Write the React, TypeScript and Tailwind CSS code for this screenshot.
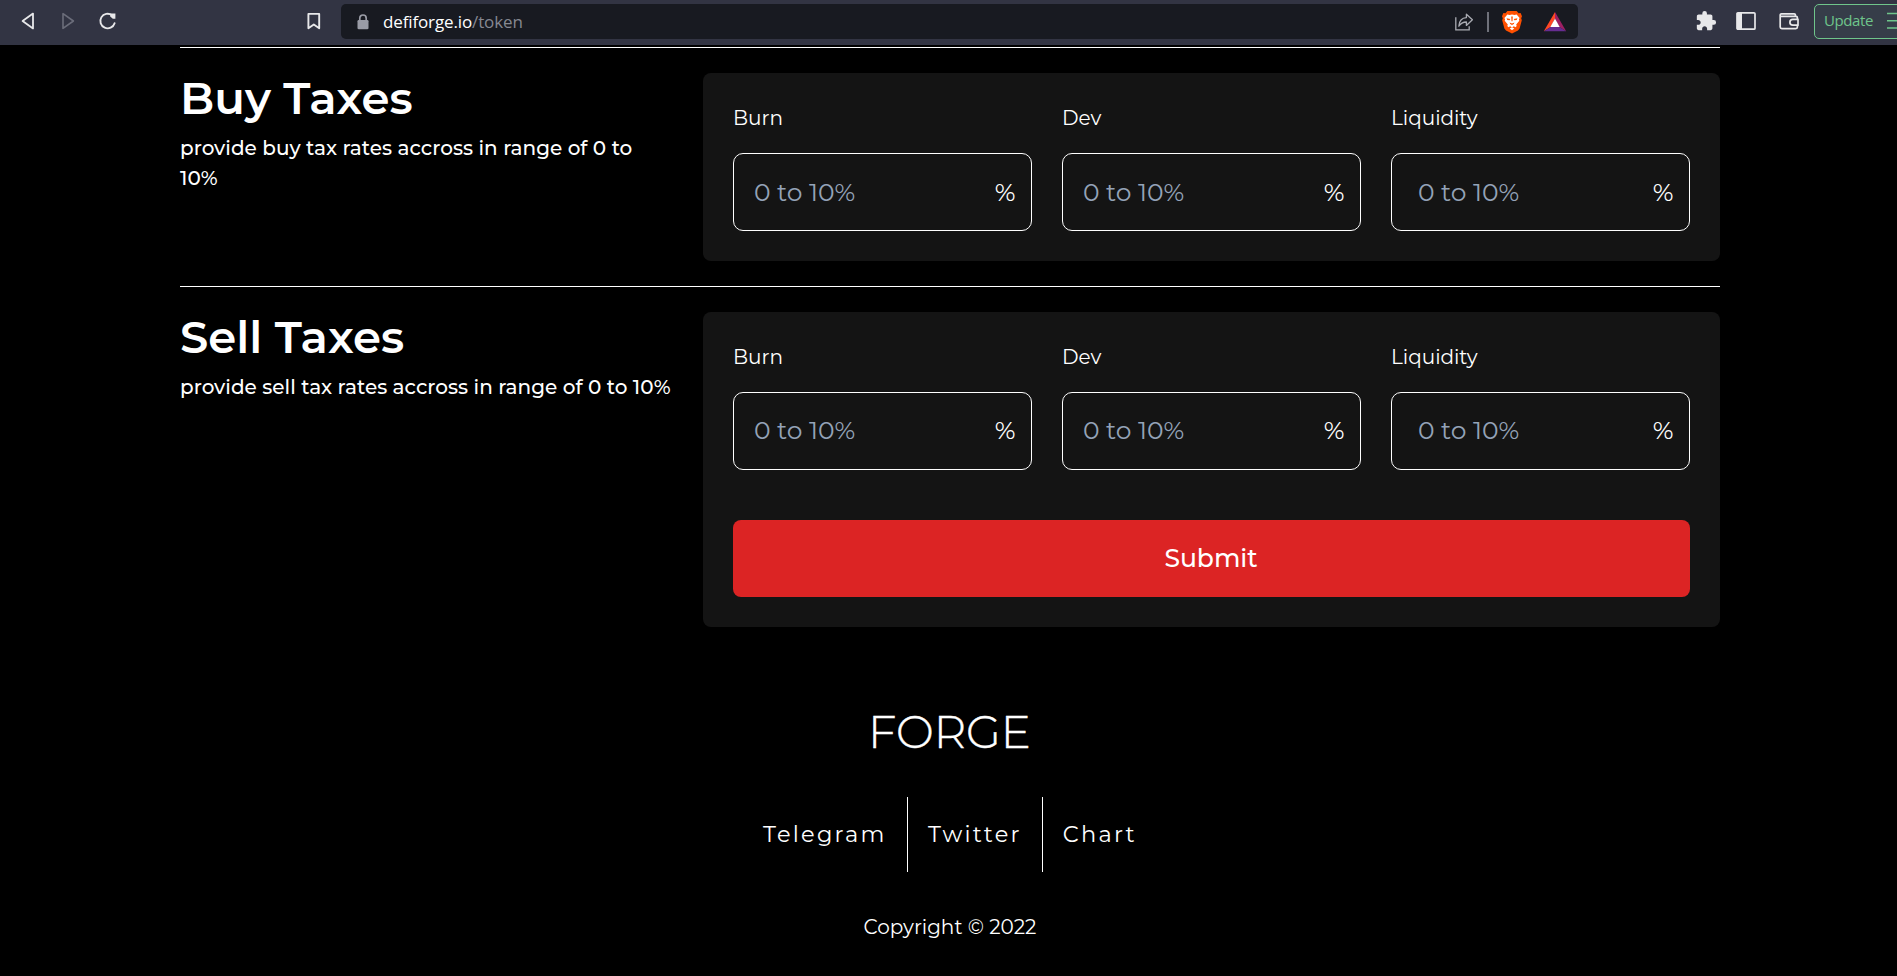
import { MdExtension } from "react-icons/md";

type Field = { label: string; input: string };

const fields: Field[] = [
  { label: "Burn", input: "pl-[20px]" },
  { label: "Dev", input: "pl-[20px]" },
  { label: "Liquidity", input: "pl-[26px]" },
];

function BrowserBar() {
  return (
    <header className="flex h-[45px] w-full items-start overflow-hidden bg-[#323443] text-[#e8e8ea]">
      <div className="flex h-[42px] w-[341px] shrink-0 items-center pl-[20px]">
        <svg width="16" height="20" viewBox="0 0 16 20" fill="none" stroke="currentColor" strokeWidth="1.8" strokeLinejoin="round">
          <path d="M13 2.6v14.8L2.6 10z" />
        </svg>
        <svg className="ml-[24px] text-[#6b6d7a]" width="16" height="20" viewBox="0 0 16 20" fill="none" stroke="currentColor" strokeWidth="1.6" strokeLinejoin="round">
          <path d="M3 2.6v14.8L13.4 10z" />
        </svg>
        <svg className="ml-[21px]" width="22" height="20" viewBox="0 0 22 20" fill="none" stroke="currentColor" strokeWidth="1.9" strokeLinecap="round">
          <path d="M17.6 12.2A7.3 7.3 0 1 1 15 4.2" />
          <path d="M13.2 2.4h5.2v5.4h-2.6l-2.6-2.4z" fill="currentColor" stroke="none" />
        </svg>
        <svg className="ml-[187px]" width="16" height="20" viewBox="0 0 16 20" fill="none" stroke="currentColor" strokeWidth="1.9" strokeLinejoin="round">
          <path d="M2.4 2.9h10.8v14.4l-5.4-3.8-5.4 3.8z" />
        </svg>
      </div>
      <div className="mt-[4px] flex h-[35px] w-[1237px] shrink-0 items-center rounded-[5px] bg-[#181a21]">
        <svg className="ml-[15px] text-[#9a9ca6]" width="14" height="16" viewBox="0 0 14 16">
          <path d="M3.8 7V4.2a3.2 3.2 0 0 1 6.4 0V7" fill="none" stroke="currentColor" strokeWidth="1.7" />
          <rect x="1.5" y="6" width="11" height="9.2" rx="1.3" fill="currentColor" />
        </svg>
        <div className="ml-[13px] w-[1071px] font-['Open_Sans','Noto_Sans',sans-serif] text-[17px] leading-[24px] tracking-[-0.13px] whitespace-nowrap text-white">
          defiforge.io<span className="text-[#868891]">/token</span>
        </div>
        <svg className="shrink-0 text-[#a9abb2]" width="20" height="20" viewBox="0 0 20 20" fill="none" stroke="currentColor" strokeWidth="1.3">
          <path d="M1.8 5.2v12.6h13.4v-3.6" />
          <path d="M12.4 2.2v3.4C7.6 5.8 5.2 9 4.8 14.2c1.8-2.9 4-4.2 7.6-4.2v3.4l6-5.6z" strokeLinejoin="round" />
        </svg>
        <div className="ml-[13px] h-[20px] w-[2px] shrink-0 bg-[#6f717a]" />
        <svg className="ml-[12px] shrink-0" width="22" height="24" viewBox="0 0 22 24">
          <path d="M6.4 1h9.2l2 2.2 2-.2 1.4 3.2-.8 2 .6 2-2.2 8.2-1.6 2.2L11 23.6 5 20.6l-1.6-2.2L1.2 10.2l.6-2L1 6.2 2.4 3l2 .2z" fill="#ff5000" />
          <path d="M6.4 4.4l2.2.5L11 4.5l2.4.4 2.2-.5 3 3.6-.7 1.4.4 1.4-3.1 3.7.5 1.6-1.2 1.1-1.7-.9L11 17.6l-1.8-1.3-1.7.9-1.2-1.1.5-1.6-3.1-3.7.4-1.4L3.4 8z" fill="#fff" />
          <path d="M5.6 8.3l3.7.8-.7 1.2-2.3-.3zM16.4 8.3l-3.7.8.7 1.2 2.3-.3zM10.2 6.6h1.6l-.3 4.6h-1zM8.6 12.6l2.4 1 2.4-1-.6 1.5-1.8 1-1.8-1z" fill="#ff5000" />
          <path d="M8.7 18.4L11 17.2l2.3 1.2L11 20.3z" fill="#fff" />
        </svg>
        <svg className="ml-[20px] shrink-0" width="24" height="20" viewBox="0 0 24 20">
          <path d="M12 0 0.8 19.2 7.6 15 12 6.6z" fill="#ff4724" />
          <path d="M12 0 23.2 19.2 16.4 15 12 6.6z" fill="#9e1f63" />
          <path d="M0.8 19.2h22.4L16.4 15H7.6z" fill="#662d91" />
          <path d="M12 6.4 16.7 15H7.3z" fill="#fff" />
        </svg>
      </div>
      <div className="flex h-[42px] w-[319px] shrink-0 items-center pl-[117px]">
        <MdExtension className="size-[22px] shrink-0" />
        <svg className="ml-[18px] shrink-0" width="22" height="20" viewBox="0 0 22 20">
          <rect x="2" y="1.8" width="18" height="16.4" rx="1" fill="none" stroke="currentColor" strokeWidth="1.7" />
          <rect x="2" y="1.8" width="5" height="16.4" fill="currentColor" />
        </svg>
        <svg className="ml-[21px] shrink-0" width="22" height="20" viewBox="0 0 22 20" fill="none" stroke="currentColor" strokeWidth="1.7" strokeLinejoin="round">
          <path d="M19.4 8.2V6.8a1.5 1.5 0 0 0-1.5-1.5H2.4" />
          <path d="M17.4 5V4a1.2 1.2 0 0 0-1.2-1.2H3.4A1.2 1.2 0 0 0 2.2 4v12a1.6 1.6 0 0 0 1.6 1.6h14a1.6 1.6 0 0 0 1.6-1.6v-1.6" />
          <path d="M20 8.4h-5.2a2.9 2.9 0 0 0 0 5.8H20z" />
        </svg>
        <div className="ml-[14px] flex h-[35px] w-[110px] shrink-0 items-center rounded-[5px] border-[1.5px] border-[#6fc58b] bg-[#363d49] pl-[9px] text-[#6fc58b]">
          <span className="w-[63px] pb-[2px] font-['Open_Sans','Noto_Sans',sans-serif] text-[15px] leading-[20px] tracking-[-0.4px]">Update</span>
          <svg width="20" height="18" viewBox="0 0 20 18" stroke="currentColor" strokeWidth="1.5">
            <path d="M0 1.6h20M0 8.8h20M0 16h20" />
          </svg>
        </div>
      </div>
    </header>
  );
}

function TaxFields({ inset }: { inset: string }) {
  return (
    <div className="grid grid-cols-3 gap-[30px]">
      {fields.map((f) => (
        <label key={f.label} className="flex flex-col gap-[20px]">
          <span className="text-[20px] leading-[30px]">{f.label}</span>
          <span className={`flex h-[78px] items-center rounded-[10px] border border-white pr-[15.5px] ${inset}`}>
            <input
              className={`min-w-0 flex-1 bg-transparent text-[25px] leading-[36px] outline-none placeholder:text-[#94a3b8] ${f.input}`}
              placeholder="0 to 10%"
            />
            <span className="text-[25px] leading-[36px]">%</span>
          </span>
        </label>
      ))}
    </div>
  );
}

function Footer() {
  return (
    <footer className="flex w-[1540px] flex-col items-center pt-[71px]">
      <h2 className="pr-px text-[45px] leading-[68px] font-light [-webkit-text-stroke:0.4px_white]">FORGE</h2>
      <nav className="mt-[31px] flex text-[22.5px] leading-[75px] tracking-[2.25px]">
        <a className="border-r border-white pr-[20.5px]">Telegram</a>
        <a className="border-r border-white px-[20px]">Twitter</a>
        <a className="pl-[20px]">Chart</a>
      </nav>
      <p className="mt-[40px] text-[20px] leading-[30px]">Copyright © 2022</p>
    </footer>
  );
}

export default function App() {
  return (
    <div className="h-[976px] w-full overflow-hidden bg-black font-['Montserrat','Inter',sans-serif] text-white">
      <BrowserBar />
      <main className="ml-[180px] w-[1540px] pt-[2px]">
        <section className="flex border-t border-white pt-[25px] pb-[25px]">
          <div className="w-[523px] shrink-0 pr-[30px]">
            <h1 className="text-[45px] leading-[50px] font-semibold">Buy Taxes</h1>
            <p className="mt-[10px] text-[20px] leading-[30px] font-medium tracking-[0.03px]">provide buy tax rates accross in range of 0 to 10%</p>
          </div>
          <div className="w-[1017px] rounded-[8px] bg-[#141414] p-[30px]">
            <TaxFields inset="pt-0" />
          </div>
        </section>
        <section className="flex border-t border-white pt-[25px]">
          <div className="w-[523px] shrink-0 pr-[30px]">
            <h1 className="text-[45px] leading-[50px] font-semibold">Sell Taxes</h1>
            <p className="mt-[10px] text-[20px] leading-[30px] font-medium tracking-[0.03px] whitespace-nowrap">provide sell tax rates accross in range of 0 to 10%</p>
          </div>
          <div className="w-[1017px] rounded-[8px] bg-[#141414] p-[30px]">
            <TaxFields inset="pb-[2px]" />
            <button className="mt-[50px] h-[77px] w-full rounded-[8px] bg-[#dc2424] pr-px text-[25px] font-medium">Submit</button>
          </div>
        </section>
        <Footer />
      </main>
    </div>
  );
}
